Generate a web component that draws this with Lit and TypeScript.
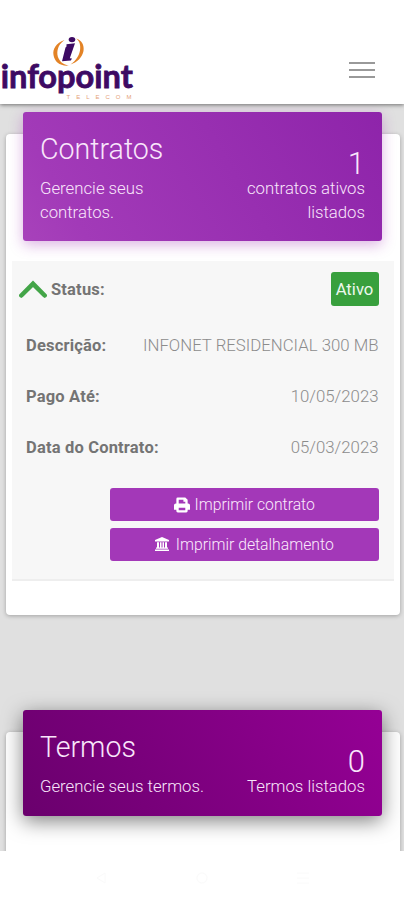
import { LitElement, html, css, svg } from "lit";
import { customElement, property } from "lit/decorators.js";

@customElement("brand-logo")
class BrandLogo extends LitElement {
  static styles = css`
    :host { display: block; width: 136px; height: 66px; }
    svg { display: block; }
    .name { font: 700 32px Lato, sans-serif; fill: #3d0a63; stroke: #3d0a63; stroke-width: 0.8px; }
    .sub { font: 400 6px "Liberation Sans", sans-serif; fill: #e5a27a; }
  `;
  render() {
    return html`<svg width="136" height="66" viewBox="0 36 136 66">
      <path d="M64.500 40C56 43 52.500 49 53.500 55C54.500 62 60.500 66.500 69 65.500C62.500 64.500 58.200 60.500 57.400 54.500C56.900 48.500 59.500 43.500 64.500 40Z" fill="#e38326" />
      <path d="M76 38.500C81.500 40 84.500 45 83.500 51C82.300 57.500 77 62.500 70.500 64.500C76 60.500 79 56 80 50.500C80.800 45.500 79.800 41 76 38.500Z" fill="#e38326" />
      <ellipse cx="72" cy="39.600" rx="3.300" ry="2.700" fill="#3d0a63" />
      <path d="M66.500 44.300L75 43.300L69.800 58.300L72 58.500L70.800 60.500L62 61.300L65.500 47.500L66.500 46.500Z" fill="#3d0a63" />
      <text class="name" x="0.800" y="88.200" textLength="132" lengthAdjust="spacingAndGlyphs">infopoint</text>
      <text class="sub" x="66.500" y="98.700" textLength="65">TELECOM</text>
    </svg>`;
  }
}

@customElement("panel-banner")
class PanelBanner extends LitElement {
  @property() heading = "";
  @property() text = "";
  @property() count = "";
  @property() label = "";
  static styles = css`
    :host { display: flex; justify-content: space-between; box-sizing: border-box; margin: 0 18px 0 17px; padding: 0 16.500px 0 17px; border-radius: 3px; color: #f9e6fb; }
    .title { font-weight: 300; font-size: 28.600px; line-height: 36px; margin-top: 19px; white-space: nowrap; }
    .text { font-size: 16.750px; line-height: 24px; margin-top: 9px; font-weight: 300; }
    .right { text-align: right; padding-top: 40px; }
    .count { font-size: 31px; line-height: 24px; font-weight: 300; }
    .label { font-size: 16.750px; line-height: 24px; font-weight: 300; }
    .text, .label { white-space: pre-line; }
  `;
  render() {
    return html`<div><div class="title">${this.heading}</div><div class="text">${this.text}</div></div>
      <div class="right"><div class="count">${this.count}</div><div class="label">${this.label}</div></div>`;
  }
}

const printer = svg`<path fill="#fff" fill-rule="evenodd" d="M4 0H12L14.500 2.500V6.500H15C16.200 6.500 17 7.500 17 8.500V13H14.500V14.500Q14.500 16 13 16H4Q2.500 16 2.500 14.500V13H0V8.500C0 7.500.8 6.500 2 6.500H2.500V1.500Q2.500 0 4 0ZM5 2.500V6.500H12V4.500H10V2.500ZM5 11V13.700H12V11Z"/>`;
const bank = svg`<path fill="#fff" d="M7 0L14 3V4.500H0V3ZM2 5.300H4V10.500H5V5.300H6.500V10.500H7.500V5.300H9V10.500H10V5.300H12V10.500H13V11.700H1V10.500H2ZM0 12.500H14V14H0Z"/>`;

@customElement("app-root")
class AppRoot extends LitElement {
  static styles = css`
    :host { display: flex; flex-direction: column; height: 900px; overflow: hidden; background: #fff; font-family: Roboto, "Liberation Sans", sans-serif; font-weight: 300; }
    header { flex: none; height: 104px; box-sizing: border-box; padding: 36px 29px 0 0; display: flex; justify-content: space-between; background: #fff; box-shadow: 0 1px 4px rgba(0,0,0,.5); position: relative; z-index: 1; }
    .menu { margin-top: 26px; width: 26px; height: 16px; display: flex; flex-direction: column; justify-content: space-between; }
    .menu i { height: 2px; background: #999; }
    main { flex: none; height: 747px; box-sizing: border-box; overflow: hidden; background: #e0e0e0; padding: 30px 4.500px 0 6px; }
    .card { background: #fff; border-radius: 4px; box-shadow: 0 1px 4px rgba(0,0,0,.28); display: flow-root; }
    .first { height: 480.500px; }
    .second { height: 200px; margin-top: 117px; }
    .contracts { margin-top: -22px; height: 129px; background: linear-gradient(60deg, #ab47bc -10%, #a23ab8 15%, #8e24aa); box-shadow: 0 4px 14px rgba(156,39,176,.35); }
    .terms { margin-top: -22px; height: 106px; background: linear-gradient(60deg, #6a006d, #950095); box-shadow: 0 5px 20px rgba(0,0,0,.5); }
    .panel { margin: 20px 6px 0; height: 319.500px; box-sizing: border-box; background: #f7f7f7; border-bottom: 2px solid #eee; padding: 11px 15px 0 7px; }
    .row { display: flex; justify-content: space-between; align-items: center; height: 51.200px; font-size: 16.800px; color: #8c8c8c; padding-left: 7px; }
    .row b { font-weight: 700; color: #747474; font-size: 16.500px; letter-spacing: 0.18px; }
    .status { height: 34px; padding: 0; margin-bottom: 13.500px; }
    .status b { flex: 1; margin-left: 4px; }
    .badge { width: 48px; height: 34px; border-radius: 3px; background: #38a03d; color: #edf8ed; line-height: 35px; text-align: center; font-weight: 400; font-size: 16.700px; }
    .actions { margin: 15px 0 0 91px; display: flex; flex-direction: column; gap: 6.500px; }
    .btn { height: 33px; border-radius: 3px; background: #a338b8; color: #fbe9fc; display: flex; align-items: center; justify-content: center; gap: 5px; font-size: 15.750px; }
    .nav { flex: none; height: 49px; display: flex; align-items: center; justify-content: space-around; padding: 2px 50px 0; }
  `;
  render() {
    return html`
      <header><brand-logo></brand-logo><div class="menu"><i></i><i></i><i></i></div></header>
      <main>
        <section class="card first">
          <panel-banner class="contracts" heading="Contratos" text=${"Gerencie seus\ncontratos."} count="1" label=${"contratos ativos\nlistados"}></panel-banner>
          <div class="panel">
            <div class="row status">
              <svg width="28" height="20" viewBox="0 0 28 20"><path d="M2.300 16.500L14 4.800L25.700 16.500" fill="none" stroke="#43a548" stroke-width="4.500" stroke-linecap="round" /></svg>
              <b>Status:</b><span class="badge">Ativo</span>
            </div>
            <div class="row"><b>Descrição:</b><span>INFONET RESIDENCIAL 300 MB</span></div>
            <div class="row"><b>Pago Até:</b><span>10/05/2023</span></div>
            <div class="row"><b>Data do Contrato:</b><span>05/03/2023</span></div>
            <div class="actions">
              <div class="btn"><svg width="16" height="16" viewBox="0 0 17 16">${printer}</svg><span>Imprimir contrato</span></div>
              <div class="btn"><svg width="16" height="14" viewBox="0 0 16 14">${bank}</svg><span>Imprimir detalhamento</span></div>
            </div>
          </div>
        </section>
        <section class="card second">
          <panel-banner class="terms" heading="Termos" text="Gerencie seus termos." count="0" label="Termos listados"></panel-banner>
        </section>
      </main>
      <div class="nav">
        <svg width="14" height="14"><path d="M11 2L3 7L11 12Z" fill="none" stroke="#fafafa" /></svg>
        <svg width="14" height="14"><circle cx="7" cy="7" r="5" fill="none" stroke="#fafafa" /></svg>
        <svg width="14" height="14"><path d="M1 2H13M1 7H13M1 12H13" fill="none" stroke="#fafafa" /></svg>
      </div>`;
  }
}
